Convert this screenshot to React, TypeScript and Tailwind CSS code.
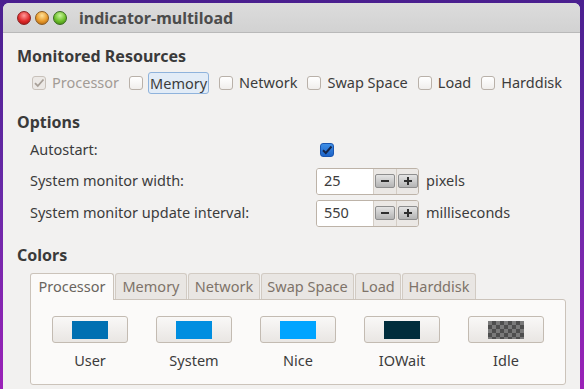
import React from "react";

const font = { fontFamily: '"Noto Sans", "Open Sans", sans-serif' };

function Check({ checked, disabled }: { checked?: boolean; disabled?: boolean }) {
  if (checked && !disabled) {
    return (
      <div className="w-[14px] h-[14px] rounded-[3px] bg-gradient-to-b from-[#3f8fe6] to-[#1e64c8] border border-[#1a56b0] flex items-center justify-center">
        <svg width="12" height="12" viewBox="0 0 12 12">
          <path d="M2 6.2 L4.8 9 L10.5 2.5" stroke="#16264a" strokeWidth="2" fill="none" />
        </svg>
      </div>
    );
  }
  return (
    <div
      className={
        "w-[14px] h-[14px] shrink-0 rounded-[3px] border flex items-center justify-center " +
        (disabled ? "border-[#c8c1ba] bg-[#ece9e6]" : "border-[#b9b1a9] bg-gradient-to-b from-[#ffffff] to-[#f0eeec]")
      }
    >
      {checked && (
        <svg width="12" height="12" viewBox="0 0 12 12">
          <path d="M2 6.2 L4.8 9 L10.5 2.5" stroke="#a8a098" strokeWidth="1.8" fill="none" />
        </svg>
      )}
    </div>
  );
}

function Spin({ value }: { value: string }) {
  return (
    <div className="flex h-[27px] w-[103px] rounded-[3px] border border-[#bdb3a8] overflow-hidden">
      <div className="w-[56px] bg-white flex items-center pl-[7px] text-[14.5px] text-[#3c3c3c]">{value}</div>
      <div className="flex-1 bg-[#ebe8e5] border-l border-[#d4cdc5] flex items-center gap-[1px] pl-[1px]">
        <div className="w-[20px] h-[14px] rounded-[2px] border border-[#8e8e8e] bg-gradient-to-b from-[#e4e4e4] to-[#b4b4b4] flex items-center justify-center">
          <div className="w-[8px] h-[2px] bg-[#2e2e2e]" />
        </div>
        <div className="w-[1px] h-full bg-[#d4cdc5]" />
        <div className="w-[20px] h-[14px] rounded-[2px] border border-[#8e8e8e] bg-gradient-to-b from-[#e4e4e4] to-[#b4b4b4] flex items-center justify-center relative">
          <div className="w-[8px] h-[2px] bg-[#2e2e2e]" />
          <div className="absolute w-[2px] h-[8px] bg-[#2e2e2e]" />
        </div>
      </div>
    </div>
  );
}

function ColorBtn({ label, color, checker }: { label: string; color?: string; checker?: boolean }) {
  return (
    <div className="flex flex-col items-center w-[76px]">
      <div className="w-[76px] h-[27px] rounded-[3px] border border-[#c3bbb2] bg-gradient-to-b from-[#f9f8f7] to-[#e9e6e3] flex items-center justify-center">
        {checker ? (
          <div
            className="w-[36px] h-[18px]"
            style={{
              backgroundColor: "#7a7a7a",
              backgroundImage:
                "linear-gradient(45deg,#4e4e4e 25%,transparent 25%,transparent 75%,#4e4e4e 75%),linear-gradient(45deg,#4e4e4e 25%,transparent 25%,transparent 75%,#4e4e4e 75%)",
              backgroundSize: "8px 8px",
              backgroundPosition: "0 0,4px 4px",
            }}
          />
        ) : (
          <div className="w-[36px] h-[18px]" style={{ backgroundColor: color }} />
        )}
      </div>
      <div className="mt-[7px] text-[14.5px] text-[#3c3c3c]">{label}</div>
    </div>
  );
}

function Tab({ label, active, w }: { label: string; active?: boolean; w: string }) {
  return (
    <div
      className={
        "h-[26px] flex items-center justify-center rounded-t-[3px] border border-b-0 text-[14.5px] " +
        w +
        " " +
        (active
          ? "bg-[#fbfaf9] border-[#cbc3ba] text-[#6a655f] h-[27px] -mb-[1px] relative z-10"
          : "bg-[#e9e6e3] border-[#d2cbc3] text-[#7e7369] mt-[1px]")
      }
    >
      {label}
    </div>
  );
}

export default function App() {
  return (
    <div
      className="w-[584px] h-[389px] overflow-hidden pt-[3px] pl-[3px] pr-[4px]"
      style={{ ...font, background: "linear-gradient(180deg,#4a1f8f 0%,#6a2aa8 50%,#9b22b8 100%)" }}
    >
      <div className="h-full flex flex-col rounded-t-[6px] overflow-hidden bg-[#f2f1f0]">
        <div className="h-[30px] flex items-center bg-gradient-to-b from-[#dcdcdc] to-[#d2d2d2] border-b border-[#b9b9b9] shrink-0">
          <div className="flex items-center gap-[4px] pl-[14px]">
            <div className="w-[14px] h-[14px] rounded-full bg-[radial-gradient(circle_at_50%_30%,#ff9a9a,#e02a2a_55%,#9a1010)] border border-[#8a2020]" />
            <div className="w-[14px] h-[14px] rounded-full bg-[radial-gradient(circle_at_50%_30%,#ffe29a,#e89a2a_55%,#a05a10)] border border-[#8a5a20]" />
            <div className="w-[14px] h-[14px] rounded-full bg-[radial-gradient(circle_at_50%_30%,#c8f59a,#6cbf2a_55%,#3a7a10)] border border-[#3a6a20]" />
          </div>
          <div className="ml-[12px] text-[16px] font-bold text-[#4c4c4c]">indicator-multiload</div>
        </div>

        <div className="flex flex-col pl-[14px] pt-[12px] text-[#3c3c3c]">
          <div className="text-[16px] font-bold h-[22px] leading-[22px] text-[#3a3a3a]">Monitored Resources</div>
          <div className="flex items-center h-[24px] mt-[4px] pl-[15px] text-[14.5px]">
            <div className="flex items-center gap-[6px]">
              <Check checked disabled />
              <span className="text-[#a29c96]">Processor</span>
            </div>
            <div className="flex items-center gap-[5px] ml-[10px]">
              <Check />
              <span className="px-[1px] h-[22px] leading-[20px] rounded-[3px] border border-[#8fb3dc] bg-[#e2ecf7]">Memory</span>
            </div>
            <div className="flex items-center gap-[6px] ml-[10px]">
              <Check />
              <span>Network</span>
            </div>
            <div className="flex items-center gap-[6px] ml-[10px]">
              <Check />
              <span>Swap Space</span>
            </div>
            <div className="flex items-center gap-[6px] ml-[10px]">
              <Check />
              <span>Load</span>
            </div>
            <div className="flex items-center gap-[6px] ml-[10px]">
              <Check />
              <span>Harddisk</span>
            </div>
          </div>

          <div className="text-[16px] font-bold h-[22px] leading-[22px] mt-[16px] text-[#3a3a3a]">Options</div>
          <div className="flex flex-col pl-[13px] text-[14.5px]">
            <div className="flex items-center h-[28px] mt-[3px]">
              <span className="w-[290px]">Autostart:</span>
              <Check checked />
            </div>
            <div className="flex items-center h-[28px] mt-[3px]">
              <span className="w-[286px]">System monitor width:</span>
              <Spin value="25" />
              <span className="ml-[7px]">pixels</span>
            </div>
            <div className="flex items-center h-[28px] mt-[4px]">
              <span className="w-[286px]">System monitor update interval:</span>
              <Spin value="550" />
              <span className="ml-[7px]">milliseconds</span>
            </div>
          </div>

          <div className="text-[16px] font-bold h-[22px] leading-[22px] mt-[17px] text-[#3a3a3a]">Colors</div>
          <div className="flex flex-col pl-[13px] mt-[6px] pr-[14px]">
            <div className="flex items-end gap-[1px]">
              <Tab label="Processor" active w="w-[84px]" />
              <Tab label="Memory" w="w-[72px]" />
              <Tab label="Network" w="w-[72px]" />
              <Tab label="Swap Space" w="w-[93px]" />
              <Tab label="Load" w="w-[46px]" />
              <Tab label="Harddisk" w="w-[74px]" />
            </div>
            <div className="h-[86px] w-[536px] bg-[#fbfaf9] border border-[#cbc3ba] rounded-b-[3px] rounded-tr-[3px] flex pt-[16px] pl-[21px] gap-[28px]">
              <ColorBtn label="User" color="#0070b2" />
              <ColorBtn label="System" color="#008ee0" />
              <ColorBtn label="Nice" color="#00a4ff" />
              <ColorBtn label="IOWait" color="#002d3c" />
              <ColorBtn label="Idle" checker />
            </div>
          </div>
        </div>
      </div>
    </div>
  );
}
